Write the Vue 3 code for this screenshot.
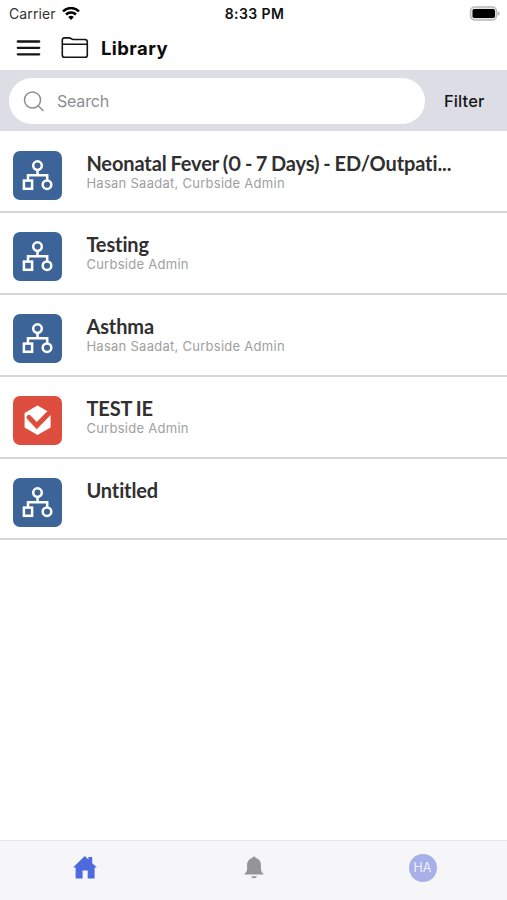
<script setup>
const items = [
  { title: 'Neonatal Fever (0 - 7 Days) - ED/Outpati...', authors: 'Hasan Saadat, Curbside Admin', kind: 'pathway' },
  { title: 'Testing', authors: 'Curbside Admin', kind: 'pathway' },
  { title: 'Asthma', authors: 'Hasan Saadat, Curbside Admin', kind: 'pathway' },
  { title: 'TEST IE', authors: 'Curbside Admin', kind: 'check' },
  { title: 'Untitled', authors: '', kind: 'pathway' },
]
</script>

<template>
  <div class="screen">
    <div class="status">
      <div class="carrier">
        <span>Carrier</span>
        <svg width="18" height="14" viewBox="0 0 18 14" fill="none" stroke="#000" stroke-width="2.5">
          <path d="M1 4.3A11.5 11.5 0 0 1 17 4.3" />
          <path d="M4 7.5A7.2 7.2 0 0 1 14 7.5" />
          <path d="M9 13L6.2 10.1A4 4 0 0 1 11.8 10.1Z" fill="#000" stroke="none" />
        </svg>
      </div>
      <span class="time">8:33 PM</span>
      <svg class="battery" width="31" height="15" viewBox="0 0 31 15">
        <rect x="1.5" y="1" width="26" height="13" rx="4" fill="#e6e6e6" stroke="#b9b9b9" stroke-width="1.4" />
        <rect x="3.5" y="3" width="22.5" height="9" rx="1.8" fill="#000" />
        <path d="M28.7 5v5q2-1 2-2.5t-2-2.5z" fill="#b0b0b0" />
      </svg>
    </div>

    <header class="header">
      <svg width="25" height="18" viewBox="0 0 25 18" stroke="#151515" stroke-width="2.3" stroke-linecap="round">
        <path d="M1.8 2.5h21.4M1.8 8.8h21.4M1.8 15.3h21.4" />
      </svg>
      <svg class="folder" width="28" height="22" viewBox="0 0 28 22" fill="none" stroke="#151515" stroke-width="1.6" stroke-linejoin="round">
        <path d="M1.3 7.3V3Q1.3.9 3.6.9H8Q9.2.9 10.2 1.7t2.2.8H23.8Q26.3 2.5 26.3 4.8V17.9Q26.3 20.3 23.9 20.3H3.7Q1.3 20.3 1.3 17.9V7.3H26.3" />
      </svg>
      <h1>Library</h1>
    </header>

    <div class="toolbar">
      <div class="search">
        <svg width="22" height="22" viewBox="0 0 22 22" fill="none" stroke="#8b8e96" stroke-width="1.5" stroke-linecap="round">
          <circle cx="9.5" cy="10" r="8" />
          <path d="M15.2 15.8L20 20.5" />
        </svg>
        <span>Search</span>
      </div>
      <span class="filter">Filter</span>
    </div>

    <main>
      <div v-for="item in items" :key="item.title" class="row">
        <div class="tile" :class="item.kind">
          <svg v-if="item.kind === 'pathway'" width="49" height="49" viewBox="0 0 49 49" fill="none" stroke="#fff" stroke-width="2.5">
            <circle cx="24.5" cy="14.6" r="4.3" />
            <path d="M24.5 19V24.2M15 29.5V24.2H34.2V29.5" />
            <rect x="10.9" y="29.6" width="8.2" height="8.2" />
            <circle cx="34" cy="33.7" r="4.3" />
          </svg>
          <svg v-else width="49" height="49" viewBox="0 0 49 49">
            <path d="M24.5 9.5L37.6 17V31.6L24.5 39L11.6 31.6V17Z" fill="#fff" />
            <path d="M16 21.4L23.8 29.6L38.6 14.6" fill="none" stroke="#de4e3f" stroke-width="5" stroke-linecap="round" />
          </svg>
        </div>
        <div class="text">
          <h2>{{ item.title }}</h2>
          <p v-if="item.authors">{{ item.authors }}</p>
        </div>
      </div>
    </main>

    <nav class="tabs">
      <div class="tab">
        <svg width="24" height="23" viewBox="0 0 24 23" fill="#4f69df">
          <path d="M0 11.6L11.8 0L15.4 3.6V1h3.8v6.2L24 11.6H21.6V22.4H14.7V14.4H9.6V22.4H2.6V11.6Z" />
        </svg>
      </div>
      <div class="tab">
        <svg width="20" height="23" viewBox="0 0 20 23" fill="#959597">
          <path d="M8.2 1.9Q8.2.4 10 .4t1.8 1.5Q16.9 3.4 16.9 9v4.2Q17 15.6 19.3 17.5V18.5H.7V17.5Q3 15.6 3.1 13.2V9Q3.1 3.4 8.2 1.9Z" />
          <path d="M7 20.2H13Q12.3 22.3 10 22.3T7 20.2Z" />
        </svg>
      </div>
      <div class="tab"><div class="avatar">HA</div></div>
    </nav>
  </div>
</template>

<style>
body { margin: 0; }
</style>

<style scoped>
.screen {
  width: 507px;
  height: 900px;
  display: flex;
  flex-direction: column;
  background: #fff;
  font-family: Inter, "Liberation Sans", sans-serif;
  overflow: hidden;
}
.status {
  height: 26px;
  display: grid;
  grid-template-columns: 1fr auto 1fr;
  align-items: center;
  padding: 1px 7px 0 9px;
  box-sizing: border-box;
  color: #111;
}
.carrier { display: flex; align-items: center; gap: 6px; font-size: 14px; letter-spacing: 0.12px; color: #333; }
.time { font-size: 14px; font-weight: 600; letter-spacing: 0.4px; }
.battery { justify-self: end; }
.header {
  height: 44px;
  display: flex;
  align-items: center;
  padding-left: 16px;
}
.folder { margin-left: 20px; }
h1 { margin: 0 0 0 12px; font-size: 18.5px; font-weight: 700; line-height: 24px; letter-spacing: 0.4px; color: #0c0c0c; }
.toolbar {
  height: 61px;
  display: flex;
  align-items: center;
  padding-left: 9px;
  box-sizing: border-box;
  background: #dddee5;
}
.search {
  width: 416px;
  height: 46px;
  display: flex;
  align-items: center;
  gap: 12px;
  padding-left: 14px;
  box-sizing: border-box;
  border-radius: 23px;
  background: #fff;
  color: #8b8d93;
  font-size: 16px;
  letter-spacing: -0.2px;
}
.filter { margin-left: 19px; font-size: 16.5px; font-weight: 450; letter-spacing: 0.1px; color: #15151a; }
main { flex: 1; }
.row {
  height: 81.9px;
  display: flex;
  padding: 19.6px 0 0 13px;
  box-sizing: border-box;
  border-bottom: 2px solid #d6d6d6;
}
.tile { width: 49px; height: 49px; border-radius: 7px; }
.tile svg { display: block; }
.pathway { background: #3c6498; }
.check { background: #de4e3f; }
.text { margin-left: 24.4px; }
h2 {
  margin: 0;
  font: 700 20px/24px Lato, sans-serif;
  font-variant-ligatures: none;
  font-variant-numeric: proportional-nums;
  letter-spacing: -0.12px;
  word-spacing: -0.8px;
  color: #303030;
  white-space: nowrap;
}
p { margin: 0; font-size: 13px; line-height: 16px; letter-spacing: 0.27px; color: #a0a0a0; }
.tabs {
  height: 60px;
  display: grid;
  grid-template-columns: repeat(3, 1fr);
  box-sizing: border-box;
  border-top: 1px solid #e6e6e9;
  background: #f6f6f9;
}
.tab { height: 53px; display: flex; align-items: center; justify-content: center; }
.avatar {
  width: 28px;
  height: 28px;
  border-radius: 50%;
  display: flex;
  align-items: center;
  justify-content: center;
  background: #a8b0ea;
  color: #eef0fc;
  font-size: 12.5px;
}
</style>
